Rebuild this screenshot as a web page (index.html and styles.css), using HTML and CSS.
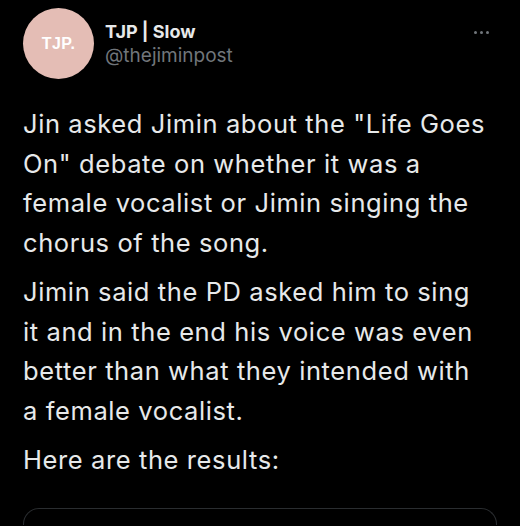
FILE: index.html
```html
<!DOCTYPE html>
<html lang="en">
<head>
  <meta charset="UTF-8">
  <title>TJP | Slow</title>
  <link rel="stylesheet" href="styles.css">
</head>
<body>

  <article class="tweet">
    <header class="tweet-header">
      <div class="avatar">TJP.</div>
      <div class="author">
        <div class="author-name">TJP | Slow</div>
        <div class="author-handle">@thejiminpost</div>
      </div>
      <div class="more">
        <span></span><span></span><span></span>
      </div>
    </header>

    <div class="tweet-body">
      <p>Jin asked Jimin about the "Life Goes On" debate on whether it was a female vocalist or Jimin singing the chorus of the song.</p>
      <p>Jimin said the PD asked him to sing it and in the end his voice was even better than what they intended with a female vocalist.</p>
      <p>Here are the results:</p>
    </div>

    <div class="media-card"></div>
  </article>

</body>
</html>
```

FILE: styles.css
```css
body {
  margin: 0;
  background-color: #000;
  color: #e7e9ea;
  font-family: Inter, 'Noto Sans', sans-serif;
  overflow: hidden;
}

.tweet {
  padding: 8px 23px 0 23px;
}

.tweet-header {
  display: flex;
  align-items: flex-start;
}

.avatar {
  width: 71px;
  height: 71px;
  border-radius: 50%;
  background-color: #e4bdb5;
  color: #fff;
  font-family: 'Liberation Sans', Arial, sans-serif;
  font-weight: bold;
  font-size: 16px;
  letter-spacing: 0.5px;
  display: flex;
  justify-content: center;
  align-items: center;
  flex-shrink: 0;
}

.author {
  margin-left: 11px;
  padding-top: 12px;
  flex: 1;
}

.author-name {
  font-weight: 700;
  font-size: 18px;
  line-height: 24px;
}

.author-handle {
  color: #71767b;
  font-size: 19px;
  line-height: 24px;
}

.more {
  display: flex;
  gap: 3px;
  padding-top: 23px;
  margin-right: 8px;
}

.more span {
  width: 3px;
  height: 3px;
  border-radius: 50%;
  background-color: #71767b;
}

.tweet-body {
  margin-top: 25px;
  padding-right: 9px;
  font-size: 25.5px;
  line-height: 39.5px;
  letter-spacing: 0.6px;
}

.tweet-body p {
  margin: 0 0 10px 0;
}

.media-card {
  margin-top: 28px;
  height: 16px;
  border: 1px solid #2a2d30;
  border-bottom: 0;
  border-radius: 16px 16px 0 0;
}
```
